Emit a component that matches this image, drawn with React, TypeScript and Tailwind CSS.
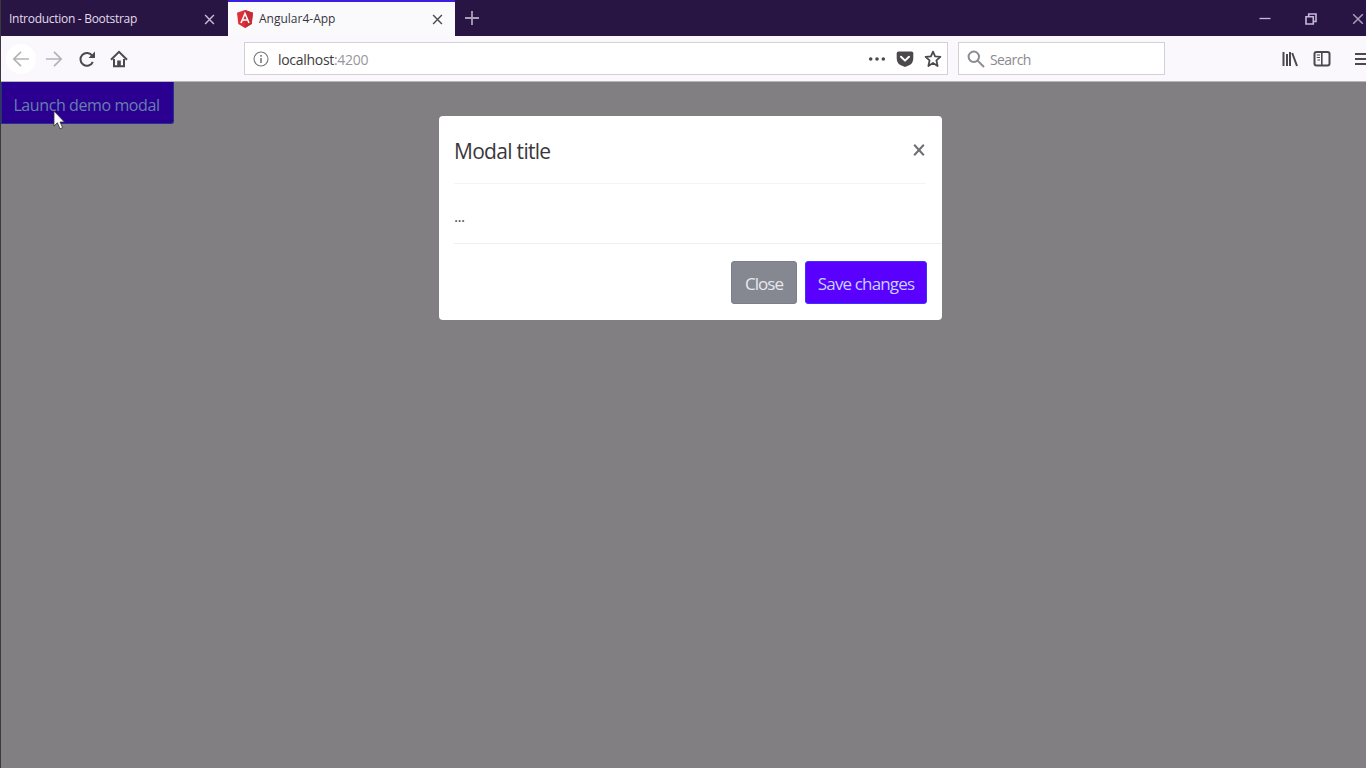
import React from "react";

type P = { className?: string; children: React.ReactNode; box?: string };

function Icon({ className = "", box = "0 0 18 18", children }: P) {
  return (
    <svg
      className={`block shrink-0 ${className}`}
      viewBox={box}
      fill="none"
      stroke="currentColor"
      strokeWidth="2"
    >
      {children}
    </svg>
  );
}

function Cross({ className }: { className: string }) {
  return (
    <Icon box="0 0 12 12" className={className}>
      <path d="M1.2 1.2 10.8 10.8M10.8 1.2 1.2 10.8" strokeWidth="1.5" />
    </Icon>
  );
}

function TabStrip() {
  return (
    <div className="flex h-9 w-full bg-[#281543] text-[12px]">
      <div className="flex w-[227px] shrink-0 items-center pl-[8px] pr-[13px] pt-[2px] text-[#e2dcec]">
        <span className="flex-1 whitespace-nowrap font-medium tracking-[-0.29px]">Introduction - Bootstrap</span>
        <Cross className="size-[11px] text-[#c9c0d6]" />
      </div>
      <div className="flex w-[227px] shrink-0 items-center border-t-[2px] border-[#3a20dc] bg-[#fafafd] pl-[9px] pr-[12px] text-[#36343a]">
        <svg className="mr-[6px] block h-[18px] w-4 shrink-0" viewBox="0 0 16 18">
          <path d="M8 0 16 2.8 14.7 14 8 18 1.3 14 0 2.8Z" fill="#dd3036" />
          <path d="M8 0 16 2.8 14.7 14 8 18Z" fill="#c42b35" />
          <path d="M4 13 8 3.5 12 13M5.6 10H10.4" fill="none" stroke="#fff" strokeWidth="1.6" />
        </svg>
        <span className="flex-1 whitespace-nowrap font-medium">Angular4-App</span>
        <Cross className="size-[11px] text-[#4b484f]" />
      </div>
      <Icon box="0 0 14 14" className="ml-[10px] mt-[11px] size-[14px] text-[#aaa0b9]">
        <path d="M7 0V14M0 7H14" strokeWidth="1.8" />
      </Icon>
      <div className="ml-auto flex shrink-0 items-center text-[#c4b9db]">
        <Icon box="0 0 12 12" className="size-3">
          <path d="M.5 6.5H11.5" strokeWidth="1.3" />
        </Icon>
        <Icon box="0 0 12 12" className="ml-[34px] mt-[2px] size-3">
          <path d="M1 3.7H8.3V11H1ZM3.7 3.5V1H11V8.5H8.5" strokeWidth="1.6" />
        </Icon>
        <Cross className="ml-[35px] mr-[2px] mt-[2px] size-3 text-[#aaa0b9]" />
      </div>
    </div>
  );
}

function Toolbar() {
  return (
    <div className="flex h-[46px] w-full items-center border-b border-[#b9b7bb] bg-[#faf8fc] text-[#4b494d]">
      <div className="ml-[5px] flex size-[30px] shrink-0 items-center justify-center rounded-full bg-white">
        <Icon className="size-[18px] text-[#b4b2b6]">
          <path d="M17 9H2M9 1.8 1.8 9 9 16.2" strokeWidth="1.7" />
        </Icon>
      </div>
      <Icon className="ml-[9px] size-[18px] text-[#b4b2b6]">
        <path d="M1 9H16M9 1.8 16.2 9 9 16.2" strokeWidth="1.7" />
      </Icon>
      <Icon className="ml-[15px] size-[18px]">
        <path d="M14.3 6A6.4 6.4 0 1 0 14.8 11.8" />
        <path d="M17 1.5V8H10.5Z" fill="currentColor" stroke="none" />
      </Icon>
      <Icon className="ml-[14px] size-[18px]">
        <path d="M1 9.8 9 1.8 17 9.8" />
        <path d="M4 9V16.3H14V9" />
        <path d="M7.2 16V10.5H10.8V16Z" fill="currentColor" stroke="none" />
      </Icon>
      <div className="ml-[116px] flex h-[33px] w-[704px] shrink-0 items-center border border-[#d3d1d6] bg-white pl-[8px] pr-[5px]">
        <Icon box="0 0 16 16" className="size-4 text-[#77757a]">
          <circle cx="8" cy="8" r="7" strokeWidth="1.1" />
          <path d="M8 7V12M8 4V5.7" strokeWidth="1.6" />
        </Icon>
        <span className="ml-[9px] mt-px flex-1 whitespace-nowrap text-[14px] tracking-[-0.3px] text-[#3d3b40]">
          localhost<span className="text-[#99979c]">:4200</span>
        </span>
        <Icon className="mr-[10px] size-[18px]">
          <g fill="currentColor" stroke="none">
            <circle cx="2.7" cy="9" r="1.8" />
            <circle cx="9" cy="9" r="1.8" />
            <circle cx="15.3" cy="9" r="1.8" />
          </g>
        </Icon>
        <Icon className="mr-[10px] size-[18px]">
          <path
            d="M2.5 1.5H15.5Q17.3 1.5 17.3 3.3V8Q17.3 12.5 14.2 14.8L9 17 3.8 14.8Q.7 12.5.7 8V3.3Q.7 1.5 2.5 1.5Z"
            fill="currentColor"
            stroke="none"
          />
          <path d="M5 6.8 9 10.6 13 6.8" stroke="#fff" strokeLinecap="round" strokeLinejoin="round" />
        </Icon>
        <Icon className="size-[18px]">
          <path
            d="M9 1.6 11.1 6.4 16.4 6.9 12.4 10.4 13.6 16 9 13 4.4 16 5.6 10.4 1.6 6.9 6.9 6.4Z"
            strokeWidth="1.8"
            strokeLinejoin="round"
          />
        </Icon>
      </div>
      <div className="ml-[10px] flex h-[33px] w-[207px] shrink-0 items-center border border-[#d3d1d6] bg-white pl-[8px]">
        <Icon className="size-[18px] text-[#8d8b90]">
          <circle cx="6.8" cy="6.8" r="5.2" />
          <path d="M10.6 10.6 17 17" />
        </Icon>
        <span className="ml-[5px] mt-[2px] text-[14px] tracking-[-0.6px] text-[#8b898e]">Search</span>
      </div>
      <Icon className="ml-[116px] size-[18px]">
        <path d="M2.5 2V16M6 4V16M9 2V16M11.2 3 16 16" />
      </Icon>
      <Icon className="ml-[14px] size-[18px]">
        <rect x="1.5" y="2" width="15" height="13.5" rx="2" />
        <path d="M8.8 2V16" strokeWidth="1.6" />
        <path d="M3.8 5H7M3.8 7.5H7M4.5 10H7" strokeWidth="1.2" />
      </Icon>
      <Icon box="0 0 14 14" className="-mr-[5px] ml-[24px] size-[14px]">
        <path d="M0 2H14M0 7H14M0 12H14" strokeWidth="1.8" />
      </Icon>
    </div>
  );
}

function Modal() {
  return (
    <div className="ml-[438px] mt-[34px] h-[204px] w-[503px] rounded-[4px] bg-white">
      <div className="ml-[15px] mr-[16px] flex h-[68px] items-center border-b border-[#f5f3f7] text-[#3a383c]">
        <h5 className="mt-[4px] flex-1 text-[21px] tracking-[-0.7px]">Modal title</h5>
        <Icon box="0 0 12 12" className="mr-[1px] size-3 text-[#706e72]">
          <path d="M1.2 .8 10.8 11.2M10.8 .8 1.2 11.2" />
        </Icon>
      </div>
      <div className="ml-[15px] flex h-[60px] items-center border-b border-[#f0eef2] pt-[4px] text-[16px] tracking-[-0.7px] text-[#5a585c]">
        <span>...</span>
      </div>
      <div className="flex justify-end gap-2 pr-[15px] pt-[17px] text-[17px]">
        <button className="h-[43px] w-[66px] rounded-[3px] border border-[#7c7e89] bg-[#858791] pt-[2px] tracking-[-0.95px] text-[#e8e8ee]">
          Close
        </button>
        <button className="h-[43px] w-[122px] whitespace-nowrap rounded-[3px] border border-[#3c32ff] bg-[#5a00ff] pt-[2px] tracking-[-0.85px] text-[#c2d4ff]">
          Save changes
        </button>
      </div>
    </div>
  );
}

export default function App() {
  return (
    <div className="flex h-[768px] w-[1366px] flex-col overflow-hidden border-l border-[#3b383e] bg-[#827f82] font-['Open_Sans','Noto_Sans',sans-serif]">
      <TabStrip />
      <Toolbar />
      <div className="flex items-start">
        <div className="relative w-0">
          <button className="h-[42px] w-[173px] whitespace-nowrap rounded-br-[3px] border border-t-0 border-[#213390] bg-[#2b0090] pt-[4px] pr-[2px] text-[16px] tracking-[-0.4px] text-[#6480ac]">
            Launch demo modal
          </button>
          <svg className="absolute left-[52px] top-[28px] h-5 w-3" viewBox="0 0 12 20">
            <path
              d="M1 1V16L4.4 12.8 7 18.8 9.6 17.6 7 12H11.4Z"
              fill="#fff"
              stroke="#333139"
              strokeWidth=".8"
            />
          </svg>
        </div>
        <Modal />
      </div>
    </div>
  );
}
